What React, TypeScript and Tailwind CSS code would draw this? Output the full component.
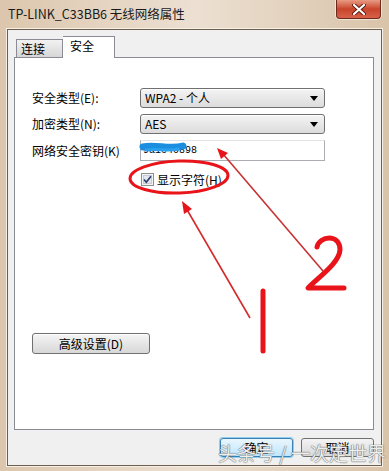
import React from 'react';

const cjk = '"Noto Sans CJK SC", "Liberation Sans", sans-serif';

function ComboBox({ value }: { value: string }) {
  return (
    <div className="flex h-[20px] w-[185px] items-center justify-between rounded-[3px] border border-[#707070] bg-gradient-to-b from-[#f4f4f4] to-[#dcdcdc] pl-[4px] pr-[6px] shadow-[inset_0_1px_0_#ffffff]">
      <span className="text-[12px] leading-none text-black">{value}</span>
      <svg width="8" height="5" viewBox="0 0 8 5">
        <path d="M0 0 H8 L4 5 Z" fill="#000" />
      </svg>
    </div>
  );
}

function Annotations() {
  return (
    <svg className="pointer-events-none absolute inset-0" width="389" height="471" viewBox="0 0 389 471">
      {/* blue scribble over key */}
      <path d="M143 147 C155 144, 170 150, 183 146" stroke="#1b8ee0" strokeWidth="7" strokeLinecap="round" fill="none" />
      <path d="M146 150 C158 148, 168 152, 178 149" stroke="#2aa0ee" strokeWidth="3" strokeLinecap="round" fill="none" />
      {/* circle round checkbox */}
      <ellipse cx="179" cy="177" rx="49" ry="16" stroke="#e8141a" strokeWidth="3" fill="none" transform="rotate(-2 179 177)" />
      {/* arrow 1 */}
      <line x1="250" y1="318" x2="186" y2="208" stroke="#d42b2b" strokeWidth="1.6" />
      <path d="M182 201 L192 209 L184 214 Z" fill="#e8141a" />
      {/* arrow 2 */}
      <line x1="323" y1="271" x2="223" y2="154" stroke="#c83232" strokeWidth="1.6" />
      <path d="M217 148 L228 153 L221 159 Z" fill="#e8141a" />
      {/* digit 1 */}
      <line x1="263" y1="291" x2="263" y2="351" stroke="#e8141a" strokeWidth="5" strokeLinecap="round" />
      {/* digit 2 */}
      <path d="M317 247 C319 236, 340 233, 340 250 C339 263, 320 276, 308 288 L344 288" stroke="#e8141a" strokeWidth="5" strokeLinecap="round" strokeLinejoin="round" fill="none" />
    </svg>
  );
}

export default function App() {
  return (
    <div
      className="relative flex h-[471px] w-[389px] flex-col overflow-hidden bg-gradient-to-r from-[#dcc6ad] via-[#ece0d2] to-[#d9c3a9]"
      style={{ fontFamily: cjk }}
    >
      {/* title bar */}
      <div className="flex h-[29px] shrink-0 items-start justify-between pl-[8px] pr-[8px]">
        <span className="mt-[6px] text-[12.5px] leading-[16px] text-[#1a1a1a]">TP-LINK_C33BB6 无线网络属性</span>
        <div className="flex h-[19px] w-[45px] items-center justify-center rounded-b-[4px] border border-t-0 border-[#6b2a1c] bg-gradient-to-b from-[#e89a83] via-[#c8442a] to-[#d8614a] shadow-[0_0_0_1px_rgba(255,255,255,0.5)]">
          <svg width="14" height="11" viewBox="0 0 14 11">
            <path d="M2 1 L12 10 M12 1 L2 10" stroke="#5a1a0e" strokeWidth="4" strokeLinecap="round" />
            <path d="M2 1 L12 10 M12 1 L2 10" stroke="#ffffff" strokeWidth="2.2" strokeLinecap="round" />
          </svg>
        </div>
      </div>

      {/* dialog body */}
      <div className="mx-[7px] flex h-[437px] flex-col border border-[#6f5f4e] bg-[#f0f0f0] shadow-[0_0_0_1px_#f6efe6]">
        {/* tabs */}
        <div className="relative z-10 flex h-[27px] items-end pl-[8px]">
          <div className="flex h-[18px] w-[47px] items-center border border-b-0 border-[#898c95] bg-gradient-to-b from-[#f2f2f2] to-[#d6d6d6] pl-[4px] text-[12px] leading-none text-black">
            连接
          </div>
          <div className="-mb-px flex h-[22px] w-[52px] items-start border border-b-0 border-l-0 border-[#898c95] bg-white pl-[7px] pt-[2px] text-[12px] leading-[14px] text-black">
            安全
          </div>
        </div>

        {/* tab panel */}
        <div className="ml-[6px] mr-[7px] flex h-[373px] flex-col border border-[#898c95] bg-white pl-[17px] pt-[30px]">
          <div className="grid grid-cols-[108px_185px] items-center gap-y-[6px] text-[12px] text-black">
            <span className="leading-none">安全类型(E):</span>
            <ComboBox value="WPA2 - 个人" />
            <span className="leading-none">加密类型(N):</span>
            <ComboBox value="AES" />
            <span className="leading-none">网络安全密钥(K)</span>
            <div
              className="flex h-[21px] items-center border border-[#abadb3] border-t-[#e3e3e3] bg-white pl-[2px] text-[10px] leading-none text-black"
              style={{ fontFamily: '"Liberation Mono", monospace' }}
            >
              9aic40898
            </div>
          </div>

          <div className="ml-[109px] mt-[11px] flex h-[15px] items-center gap-[3px] text-[12px] leading-none text-black">
            <svg width="13" height="13" viewBox="0 0 13 13">
              <rect x="0.5" y="0.5" width="12" height="12" fill="#f4f4f4" stroke="#8e8f8f" />
              <rect x="2.5" y="2.5" width="8" height="8" fill="#e4e8ee" stroke="#c8ccd2" />
              <path d="M3 6.5 L5.3 9.2 L10 3.2" stroke="#2a3f6e" strokeWidth="1.7" fill="none" />
            </svg>
            <span>显示字符(H)</span>
          </div>

          <button className="mt-[146px] flex h-[21px] w-[118px] items-center justify-center rounded-[3px] border border-[#707070] bg-gradient-to-b from-[#f4f4f4] to-[#d8d8d8] text-[12px] leading-none text-black shadow-[inset_0_1px_0_#ffffff]">
            高级设置(D)
          </button>
        </div>

        {/* bottom buttons */}
        <div className="mr-[7px] mt-[8px] flex justify-end gap-[8px]">
          <button className="flex h-[19px] w-[73px] items-center justify-center rounded-[3px] border border-[#3c7fb1] bg-gradient-to-b from-[#eaf6fd] to-[#bee6fd] text-[12px] leading-none text-black shadow-[0_0_0_1px_#8ecff0]">
            确定
          </button>
          <button className="flex h-[19px] w-[73px] items-center justify-center rounded-[3px] border border-[#707070] bg-gradient-to-b from-[#f4f4f4] to-[#d8d8d8] text-[12px] leading-none text-black">
            取消
          </button>
        </div>
      </div>

      <Annotations />

      {/* watermark */}
      <div className="pointer-events-none absolute left-[218px] top-[442px] whitespace-nowrap text-[19px] leading-[22px] text-white/90 [text-shadow:0_0_1px_#555,0_0_1px_#555]">
        头条号 / 一次定世界
      </div>
    </div>
  );
}
